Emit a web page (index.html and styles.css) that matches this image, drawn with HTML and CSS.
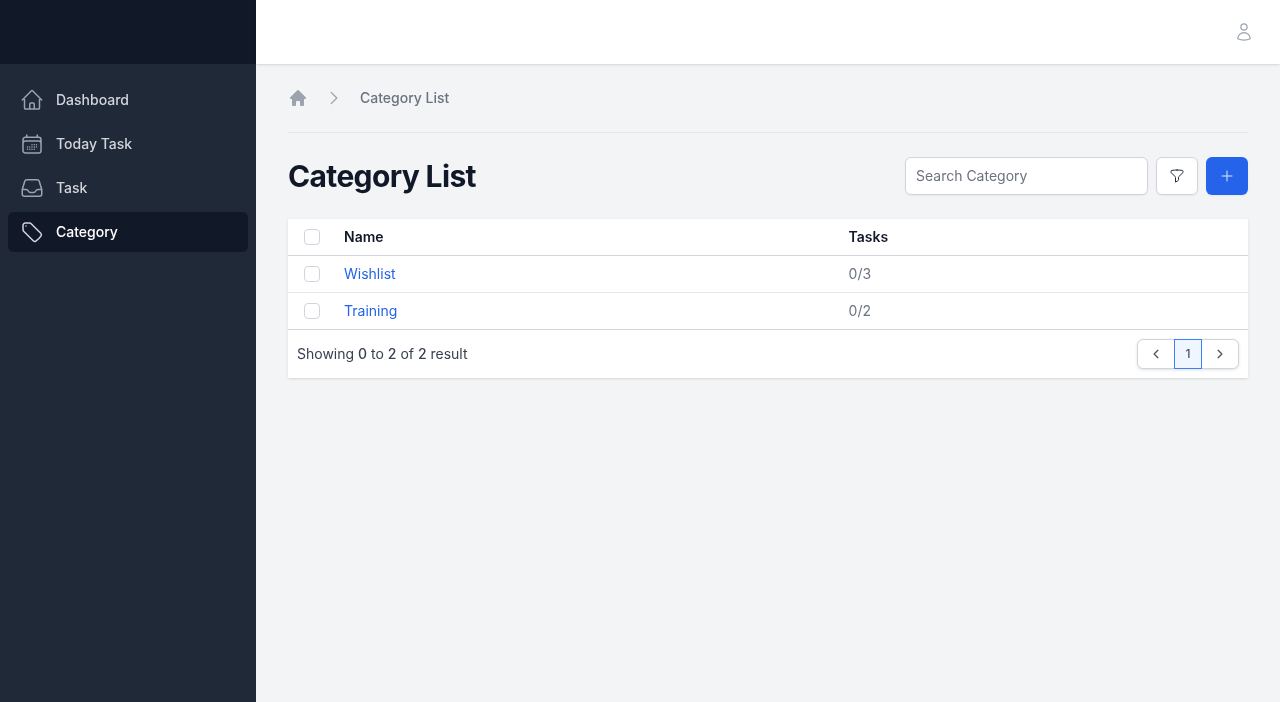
FILE: index.html
```html
<!DOCTYPE html>
<html lang="en">
<head>
<meta charset="utf-8">
<title>Category List</title>
<link rel="stylesheet" href="styles.css">
</head>
<body>
<div class="app">
  <aside class="sidebar">
    <div class="brand"></div>
    <nav class="nav">
      <a class="nav-item">
        <svg class="nav-icon" viewBox="0 0 24 24" fill="none" stroke="currentColor" stroke-width="1.5" stroke-linecap="round" stroke-linejoin="round"><path d="M2.25 12l8.954-8.955c.44-.439 1.152-.439 1.591 0L21.75 12M4.5 9.75v10.125c0 .621.504 1.125 1.125 1.125H9.75v-4.875c0-.621.504-1.125 1.125-1.125h2.25c.621 0 1.125.504 1.125 1.125V21h4.125c.621 0 1.125-.504 1.125-1.125V9.75M8.25 21h8.25"/></svg>
        <span>Dashboard</span>
      </a>
      <a class="nav-item">
        <svg class="nav-icon" viewBox="0 0 24 24" fill="none" stroke="currentColor" stroke-width="1.5" stroke-linecap="round" stroke-linejoin="round"><path d="M6.75 3v2.25M17.25 3v2.25M3 18.75V7.5a2.25 2.25 0 012.25-2.25h13.5A2.25 2.25 0 0121 7.5v11.25m-18 0A2.25 2.25 0 005.25 21h13.5A2.25 2.25 0 0021 18.75m-18 0v-7.5A2.25 2.25 0 015.25 9h13.5A2.25 2.25 0 0121 11.25v7.5m-9-6h.008v.008H12v-.008zM12 15h.008v.008H12V15zm0 2.25h.008v.008H12v-.008zM9.75 15h.008v.008H9.75V15zm0 2.25h.008v.008H9.75v-.008zM7.5 15h.008v.008H7.5V15zm0 2.25h.008v.008H7.5v-.008zm6.75-4.5h.008v.008h-.008v-.008zm0 2.25h.008v.008h-.008V15zm0 2.25h.008v.008h-.008v-.008zm2.25-4.5h.008v.008H16.5v-.008zm0 2.25h.008v.008H16.5V15z"/></svg>
        <span>Today Task</span>
      </a>
      <a class="nav-item">
        <svg class="nav-icon" viewBox="0 0 24 24" fill="none" stroke="currentColor" stroke-width="1.5" stroke-linecap="round" stroke-linejoin="round"><path d="M2.25 13.5h3.86a2.25 2.25 0 012.012 1.244l.256.512a2.25 2.25 0 002.013 1.244h3.218a2.25 2.25 0 002.013-1.244l.256-.512a2.25 2.25 0 012.013-1.244h3.859m-19.5.338V18a2.25 2.25 0 002.25 2.25h15A2.25 2.25 0 0021.75 18v-4.162c0-.224-.034-.447-.1-.661L19.24 5.338a2.25 2.25 0 00-2.15-1.588H6.911a2.25 2.25 0 00-2.15 1.588L2.35 13.177a2.25 2.25 0 00-.1.661z"/></svg>
        <span>Task</span>
      </a>
      <a class="nav-item is-active">
        <svg class="nav-icon" viewBox="0 0 24 24" fill="none" stroke="currentColor" stroke-width="1.5" stroke-linecap="round" stroke-linejoin="round"><path d="M9.568 3H5.25A2.25 2.25 0 003 5.25v4.318c0 .597.237 1.17.659 1.591l9.581 9.581c.699.699 1.78.872 2.607.33a18.095 18.095 0 005.223-5.223c.542-.827.369-1.908-.33-2.607L11.16 3.66A2.25 2.25 0 009.568 3z"/><path d="M6 6h.008v.008H6V6z"/></svg>
        <span>Category</span>
      </a>
    </nav>
  </aside>
  <div class="content">
    <header class="topbar">
      <svg class="user-icon" viewBox="0 0 24 24" fill="none" stroke="currentColor" stroke-width="1.5" stroke-linecap="round" stroke-linejoin="round"><path d="M15.75 6a3.75 3.75 0 11-7.5 0 3.75 3.75 0 017.5 0zM4.501 20.118a7.5 7.5 0 0114.998 0A17.933 17.933 0 0112 21.75c-2.676 0-5.216-.584-7.499-1.632z"/></svg>
    </header>
    <main class="main">
      <div class="breadcrumb">
        <svg class="crumb-home" viewBox="0 0 20 20" fill="currentColor"><path fill-rule="evenodd" d="M9.293 2.293a1 1 0 011.414 0l7 7A1 1 0 0117 11h-1v6a1 1 0 01-1 1h-2a1 1 0 01-1-1v-3a1 1 0 00-1-1H9a1 1 0 00-1 1v3a1 1 0 01-1 1H5a1 1 0 01-1-1v-6H3a1 1 0 01-.707-1.707l7-7z" clip-rule="evenodd"/></svg>
        <svg class="crumb-sep" viewBox="0 0 24 24" fill="none" stroke="currentColor" stroke-width="1.75" stroke-linecap="round" stroke-linejoin="round"><path d="M8.25 4.5l7.5 7.5-7.5 7.5"/></svg>
        <span class="crumb-text">Category List</span>
      </div>
      <div class="title-row">
        <h1 class="title">Category List</h1>
        <div class="actions">
          <input class="search" type="text" placeholder="Search Category">
          <button class="btn-filter" type="button" aria-label="Filter">
            <svg viewBox="0 0 24 24" fill="none" stroke="currentColor" stroke-width="1.5" stroke-linecap="round" stroke-linejoin="round"><path d="M12 3c2.755 0 5.455.232 8.083.678.533.09.917.556.917 1.096v1.044a2.25 2.25 0 01-.659 1.591l-5.432 5.432a2.25 2.25 0 00-.659 1.591v2.927a2.25 2.25 0 01-1.244 2.013L9.75 21v-6.568a2.25 2.25 0 00-.659-1.591L3.659 7.409A2.25 2.25 0 013 5.818V4.774c0-.54.384-1.006.917-1.096A48.32 48.32 0 0112 3z"/></svg>
          </button>
          <button class="btn-add" type="button" aria-label="Add">
            <svg viewBox="0 0 24 24" fill="none" stroke="currentColor" stroke-width="1.5" stroke-linecap="round" stroke-linejoin="round"><path d="M12 4.5v15m7.5-7.5h-15"/></svg>
          </button>
        </div>
      </div>
      <section class="card">
        <div class="row row-head">
          <span class="cell-check"><span class="check"></span></span>
          <span class="cell-name">Name</span>
          <span class="cell-tasks">Tasks</span>
        </div>
        <div class="row">
          <span class="cell-check"><span class="check"></span></span>
          <span class="cell-name"><a class="link">Wishlist</a></span>
          <span class="cell-tasks">0/3</span>
        </div>
        <div class="row row-last">
          <span class="cell-check"><span class="check"></span></span>
          <span class="cell-name"><a class="link">Training</a></span>
          <span class="cell-tasks">0/2</span>
        </div>
        <div class="footer">
          <p class="result">Showing <b>0</b> to <b>2</b> of <b>2</b> result</p>
          <div class="pager">
            <button class="page-btn page-prev" type="button" aria-label="Previous">
              <svg viewBox="0 0 24 24" fill="none" stroke="currentColor" stroke-width="2.5" stroke-linecap="round" stroke-linejoin="round"><path d="M15.75 19.5L8.25 12l7.5-7.5"/></svg>
            </button>
            <span class="page-current">1</span>
            <button class="page-btn page-next" type="button" aria-label="Next">
              <svg viewBox="0 0 24 24" fill="none" stroke="currentColor" stroke-width="2.5" stroke-linecap="round" stroke-linejoin="round"><path d="M8.25 4.5l7.5 7.5-7.5 7.5"/></svg>
            </button>
          </div>
        </div>
      </section>
    </main>
  </div>
</div>
</body>
</html>
```
FILE: styles.css
```css
* { box-sizing: border-box; }
html, body { margin: 0; height: 100%; }
body {
  font-family: Inter, "Liberation Sans", sans-serif;
  font-size: 14px;
  line-height: 20px;
  background: #f3f4f6;
  color: #111827;
  overflow: hidden;
}
.app { display: flex; height: 702px; will-change: transform; }
.sidebar { width: 256px; flex: none; background: #1f2937; }
.brand { height: 64px; background: #111827; }
.nav { display: flex; flex-direction: column; gap: 4px; padding: 16px 8px; }
.nav-item {
  display: flex;
  align-items: center;
  gap: 12px;
  height: 40px;
  padding: 0 12px;
  border-radius: 6px;
  color: #d1d5db;
  font-weight: 500;
}
.nav-icon { width: 24px; height: 24px; flex: none; color: #9ca3af; }
.nav-item.is-active { background: #111827; color: #fff; }
.nav-item.is-active .nav-icon { color: #d1d5db; }
.content { flex: 1; min-width: 0; display: flex; flex-direction: column; }
.topbar {
  height: 64px;
  flex: none;
  background: #fff;
  box-shadow: 0 1px 3px rgba(0,0,0,.1), 0 1px 2px -1px rgba(0,0,0,.1);
  display: flex;
  align-items: center;
  justify-content: flex-end;
  padding: 0 26px;
}
.user-icon { width: 20px; height: 20px; color: #9ca3af; }
.main { padding: 0 32px; }
.breadcrumb {
  display: flex;
  align-items: center;
  height: 69px;
  border-bottom: 1px solid #e5e7eb;
  padding-bottom: 1px;
}
.crumb-home { width: 20px; height: 20px; color: #9ca3af; flex: none; }
.crumb-sep { width: 18px; height: 18px; color: #9ca3af; flex: none; margin-left: 17px; }
.crumb-text { margin-left: 17px; color: #6b7280; font-weight: 500; }
.title-row {
  display: flex;
  align-items: center;
  justify-content: space-between;
  margin-top: 24px;
  height: 38px;
}
.title { margin: 0; font-size: 30px; line-height: 36px; font-weight: 700; letter-spacing: -0.64px; color: #111827; }
.actions { display: flex; align-items: center; }
.search {
  width: 243px;
  height: 38px;
  padding: 0 10px 2px;
  border: 1px solid #d1d5db;
  border-radius: 6px;
  background: #fff;
  font: 14px/20px Inter, "Liberation Sans", sans-serif;
  color: #111827;
  box-shadow: 0 1px 2px rgba(0,0,0,.05);
  outline: none;
}
.search::placeholder { color: #6b7280; opacity: 1; }
.btn-filter {
  width: 42px;
  height: 38px;
  margin-left: 8px;
  padding: 0;
  display: flex;
  align-items: center;
  justify-content: center;
  background: #fff;
  border: 1px solid #d1d5db;
  border-radius: 6px;
  color: #1f2937;
  box-shadow: 0 1px 2px rgba(0,0,0,.05);
}
.btn-filter svg { width: 16px; height: 16px; }
.btn-add {
  width: 42px;
  height: 38px;
  margin-left: 8px;
  padding: 0;
  display: flex;
  align-items: center;
  justify-content: center;
  background: #2563eb;
  border: 0;
  border-radius: 6px;
  color: #dbeafe;
  box-shadow: 0 1px 2px rgba(0,0,0,.05);
}
.btn-add svg { width: 16px; height: 16px; }
.card {
  margin-top: 24px;
  background: #fff;
  box-shadow: 0 1px 3px rgba(0,0,0,.1), 0 1px 2px -1px rgba(0,0,0,.1);
}
.row {
  display: flex;
  align-items: center;
  height: 37px;
  border-bottom: 1px solid #e5e7eb;
  color: #6b7280;
}
.row-head { color: #111827; font-weight: 600; border-bottom-color: #d1d5db; }
.row-last { border-bottom-color: #d1d5db; }
.cell-check { width: 56px; flex: none; padding-left: 16px; display: flex; }
.check {
  width: 16px;
  height: 16px;
  border: 1px solid #d1d5db;
  border-radius: 4px;
  background: #fff;
}
.cell-name { width: 504.6px; flex: none; }
.link { color: #2563eb; }
.footer {
  height: 48px;
  display: flex;
  align-items: center;
  justify-content: space-between;
  padding: 0 9px;
}
.result { margin: 0; color: #374151; }
.result b { font-weight: 500; }
.pager {
  display: flex;
  height: 30px;
  border: 1px solid #d1d5db;
  border-radius: 6px;
  box-shadow: 0 1px 3px rgba(0,0,0,.12);
  background: #fff;
}
.page-btn {
  padding: 0;
  border: 0;
  background: transparent;
  color: #4b5563;
  display: flex;
  align-items: center;
  justify-content: center;
  border-radius: 6px;
}
.page-btn svg { width: 12px; height: 12px; }
.page-prev { width: 36px; }
.page-next { width: 36px; }
.page-current {
  width: 28px;
  margin: -1px 0;
  display: flex;
  align-items: center;
  justify-content: center;
  background: #eff6ff;
  border: 1px solid #3b82f6;
  font-size: 12px;
  color: #4b5563;
  font-weight: 500;
}
```
